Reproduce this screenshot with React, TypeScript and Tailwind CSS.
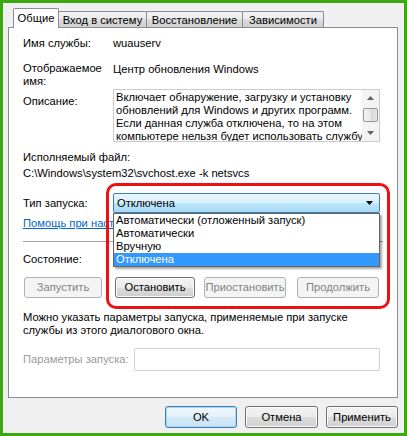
import React from 'react';

const Btn: React.FC<{ label: string; disabled?: boolean; primary?: boolean; className?: string }> = ({ label, disabled, primary, className }) => (
  <div
    className={`flex items-center justify-center h-[21px] rounded-[3px] border ${
      disabled
        ? 'border-[#adb2b5] bg-[#f4f4f4] text-[#838383]'
        : primary
        ? 'border-[#3c7fb1] bg-[linear-gradient(#eef7fd,#e3f1fb_50%,#d4e9f8_50%,#c9e2f4)] shadow-[inset_0_0_0_1px_#a8d8f6] text-black'
        : 'border-[#707070] bg-[linear-gradient(#f2f2f2,#ebebeb_50%,#dddddd_50%,#cfcfcf)] shadow-[inset_0_0_0_1px_#fcfcfc] text-black'
    } ${className ?? ''}`}
  >
    {label}
  </div>
);

const Tab: React.FC<{ label: string; active?: boolean; className?: string }> = ({ label, active, className }) =>
  active ? (
    <div className={`relative z-10 -mb-px h-[20px] flex justify-center items-start pt-[3px] bg-white border border-b-0 border-[#898c95] rounded-t-[2px] ${className ?? ''}`}>
      {label}
    </div>
  ) : (
    <div className={`h-[16px] flex justify-center items-center pt-[1px] bg-[linear-gradient(#f2f2f2,#ebebeb_50%,#dddddd_50%,#cfcfcf)] border border-b-0 border-[#898c95] rounded-t-[2px] ${className ?? ''}`}>
      {label}
    </div>
  );

const App: React.FC = () => {
  return (
    <div className="relative w-[407px] h-[436px] border-[3px] border-[#3aa80e] bg-[#f0f0f0] font-['Liberation_Sans',Arial,sans-serif] text-[11.2px] leading-[13px] text-black overflow-hidden">
      {/* Tabs */}
      <div className="flex items-end mt-[5px] ml-[10px] h-[19px]">
        <Tab label="Общие" active className="w-[46px]" />
        <Tab label="Вход в систему" className="-ml-px w-[89px]" />
        <Tab label="Восстановление" className="-ml-px w-[97px]" />
        <Tab label="Зависимости" className="-ml-px w-[82px]" />
      </div>

      {/* Panel */}
      <div className="ml-[5px] w-[390px] h-[371px] bg-white border border-[#898c95] pl-[14px] pt-[9px] flex flex-col">
        <div className="flex h-[13px]">
          <div className="w-[90px]">Имя службы:</div>
          <div>wuauserv</div>
        </div>

        <div className="flex mt-[12px] h-[26px]">
          <div className="w-[90px]">Отображаемое<br />имя:</div>
          <div className="pt-px">Центр обновления Windows</div>
        </div>

        <div className="flex mt-[1px]">
          <div className="w-[90px] pt-[6px]">Описание:</div>
          <div className="flex w-[267px] h-[53px] border border-[#c9cbd0]">
            <div className="flex-1 pl-[2px] pt-[1px] overflow-hidden whitespace-nowrap">
              Включает обнаружение, загрузку и установку<br />
              обновлений для Windows и других программ.<br />
              Если данная служба отключена, то на этом<br />
              компьютере нельзя будет использовать службу
            </div>
            <div className="w-[17px] bg-[#f3f3f3] flex flex-col items-center">
              <svg width="17" height="17" viewBox="0 0 17 17" className="shrink-0">
                <polygon points="5,10 8.5,6 12,10" fill="#606060" />
              </svg>
              <div className="w-[15px] h-[14px] mt-[1px] rounded-[2px] border border-[#979797] bg-[linear-gradient(90deg,#f3f3f3,#e8e8e8_50%,#d6d6d6_50%,#e4e4e4)]" />
              <div className="flex-1" />
              <svg width="17" height="17" viewBox="0 0 17 17" className="shrink-0">
                <polygon points="5,7 12,7 8.5,11" fill="#606060" />
              </svg>
            </div>
          </div>
        </div>

        <div className="mt-[9px]">Исполняемый файл:</div>
        <div className="mt-[3px]">C:\Windows\system32\svchost.exe -k netsvcs</div>

        <div className="flex items-center mt-[13px]">
          <div className="w-[90px]">Тип запуска:</div>
          <div className="relative w-[267px]">
            <div className="flex items-center h-[20px] pl-[3px] pr-[6px] rounded-[2px] border border-[#3c7fb1] bg-[linear-gradient(#eaf6fd,#d9f0fc_50%,#bee6fd_50%,#a7d9f5)]">
              <span className="flex-1">Отключена</span>
              <svg width="7" height="4" viewBox="0 0 7 4">
                <polygon points="0,0 7,0 3.5,4" fill="#000" />
              </svg>
            </div>
            {/* Open dropdown list */}
            <div className="absolute z-20 left-0 top-[20px] w-[267px] bg-white border border-[#646464] shadow-[2px_2px_2px_rgba(0,0,0,0.35)]">
              <div className="h-[13px] pl-[2px]">Автоматически (отложенный запуск)</div>
              <div className="h-[13px] pl-[2px]">Автоматически</div>
              <div className="h-[13px] pl-[2px]">Вручную</div>
              <div className="h-[13px] pl-[2px] bg-[#3399ff] text-white">Отключена</div>
            </div>
          </div>
        </div>

        <div className="mt-[4px] w-[90px] overflow-hidden text-[#0066cc] underline whitespace-nowrap">Помощь при настройке параметров запуска.</div>
        <div className="mt-[11px] mr-[14px] h-px bg-[#a0a0a0]" />

        <div className="mt-[11px]">Состояние:</div>

        <div className="flex mt-[11px]">
          <Btn label="Запустить" disabled className="w-[78px] ml-[1px]" />
          <Btn label="Остановить" className="w-[80px] ml-[13px]" />
          <Btn label="Приостановить" disabled className="w-[82px] ml-[9px]" />
          <Btn label="Продолжить" disabled className="w-[82px] ml-[11px]" />
        </div>

        <div className="mt-[13px]">
          Можно указать параметры запуска, применяемые при запуске<br />
          службы из этого диалогового окна.
        </div>

        <div className="flex items-center mt-[11px]">
          <div className="w-[111px] text-[#9a9a9a] whitespace-nowrap">Параметры запуска:</div>
          <div className="w-[246px] h-[23px] border border-[#cfd1d6] rounded-[2px] bg-white" />
        </div>
      </div>

      {/* Bottom buttons */}
      <div className="flex justify-end mt-[8px] mr-[6px] gap-[8px]">
        <Btn label="OK" primary className="w-[72px] h-[22px]" />
        <Btn label="Отмена" className="w-[73px] h-[22px]" />
        <Btn label="Применить" className="w-[72px] h-[22px]" />
      </div>

      {/* Red highlight annotation */}
      <div className="absolute z-30 left-[103px] top-[180px] w-[284px] h-[126px] border-[3px] border-[#ee1111] rounded-[10px] pointer-events-none" />
    </div>
  );
};

export default App;
